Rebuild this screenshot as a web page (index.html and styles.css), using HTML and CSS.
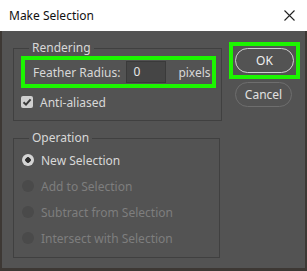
FILE: index.html
```html
<!DOCTYPE html>
<html lang="en">
<head>
  <meta charset="UTF-8">
  <meta name="viewport" content="width=device-width, initial-scale=1.0">
  <title>Make Selection</title>
  <link rel="stylesheet" href="styles.css">
</head>
<body>
  <div class="titlebar">
    <span class="title">Make Selection</span>
    <svg class="close" width="11" height="11" viewBox="0 0 11 11">
      <path d="M0.5 0.5 L10.5 10.5 M10.5 0.5 L0.5 10.5" stroke="#222" stroke-width="1.1" fill="none"/>
    </svg>
  </div>

  <div class="dialog">
    <div class="main">
      <fieldset class="group rendering">
        <legend>Rendering</legend>
        <div class="highlight feather">
          <span class="label">Feather Radius:</span>
          <span class="field">0</span>
          <span class="label unit">pixels</span>
        </div>
        <div class="check-row">
          <span class="checkbox">
            <svg width="10" height="10" viewBox="0 0 10 10">
              <path d="M1.5 5.2 L4 7.6 L8.6 2.4" stroke="#3a3a3a" stroke-width="2" fill="none"/>
            </svg>
          </span>
          <span class="label">Anti-aliased</span>
        </div>
      </fieldset>

      <fieldset class="group operation">
        <legend>Operation</legend>
        <div class="radio-row">
          <span class="radio on"></span>
          <span class="label">New Selection</span>
        </div>
        <div class="radio-row disabled">
          <span class="radio"></span>
          <span class="label">Add to Selection</span>
        </div>
        <div class="radio-row disabled">
          <span class="radio"></span>
          <span class="label">Subtract from Selection</span>
        </div>
        <div class="radio-row disabled">
          <span class="radio"></span>
          <span class="label">Intersect with Selection</span>
        </div>
      </fieldset>
    </div>

    <div class="buttons">
      <div class="highlight ok-wrap">
        <button class="btn ok">OK</button>
      </div>
      <button class="btn cancel">Cancel</button>
    </div>
  </div>
</body>
</html>
```

FILE: styles.css
```css
body {
  margin: 0;
  width: 307px;
  height: 271px;
  overflow: hidden;
  background: #3d3834;
  font-family: "Noto Sans", "Open Sans", sans-serif;
  font-size: 12px;
}
.titlebar {
  height: 31px;
  background: #fff;
  display: flex;
  align-items: center;
  justify-content: space-between;
  padding: 0 12px 0 9px;
  color: #111;
}
.title {
  font-size: 12px;
}
.dialog {
  height: 237px;
  margin: 0 2px;
  background: #535353;
  display: flex;
  color: #d8d8d8;
}
.main {
  width: 216px;
  flex-shrink: 0;
  padding-left: 11px;
}
.group {
  margin: 0;
  padding: 0;
  border: 1px solid #404040;
  box-sizing: border-box;
}
.group legend {
  margin-left: 15px;
  padding: 0 3px;
  line-height: 16px;
  color: #d8d8d8;
}
.rendering {
  width: 209px;
  margin-top: 9px;
  padding-bottom: 8px;
}
.operation {
  width: 207px;
  margin-top: 9px;
  padding-bottom: 6px;
}
.highlight {
  border: 4px solid #1cf500;
}
.feather {
  margin-left: 7px;
  width: 195px;
  height: 32px;
  box-sizing: border-box;
  display: flex;
  align-items: center;
  padding-left: 8px;
}
.field {
  width: 40px;
  height: 22px;
  margin-left: 6px;
  box-sizing: border-box;
  background: #454545;
  border: 1px solid #3a3a3a;
  padding-left: 6px;
  line-height: 20px;
  color: #e8e8e8;
}
.unit {
  margin-left: 12px;
}
.check-row {
  display: flex;
  align-items: center;
  height: 20px;
  margin-top: 4px;
  padding-left: 7px;
}
.checkbox {
  width: 12px;
  height: 12px;
  border-radius: 2px;
  background: #d0d0d0;
  display: flex;
  align-items: center;
  justify-content: center;
  margin-right: 7px;
}
.radio-row {
  display: flex;
  align-items: center;
  height: 26px;
  padding-left: 8px;
}
.radio-row:first-of-type {
  margin-top: 1px;
}
.radio {
  width: 12px;
  height: 12px;
  border-radius: 50%;
  background: #4a4a4a;
  margin-right: 7px;
  box-sizing: border-box;
}
.radio.on {
  background: radial-gradient(circle, #2e2e2e 0 2.5px, #d4d4d4 3px);
}
.disabled .label {
  color: #7e7e7e;
}
.buttons {
  padding-top: 11px;
  display: flex;
  flex-direction: column;
}
.ok-wrap {
  padding: 2px;
}
.btn {
  width: 57px;
  height: 25px;
  border-radius: 13px;
  background: #535353;
  font-family: "Noto Sans", "Open Sans", sans-serif;
  font-size: 12px;
  padding: 0;
}
.ok {
  display: block;
  width: 59px;
  border: 1px solid #cfcfcf;
  color: #f0f0f0;
}
.cancel {
  margin: 3px 0 0 6px;
  border: 1px solid #6e6e6e;
  color: #e0e0e0;
}
```
